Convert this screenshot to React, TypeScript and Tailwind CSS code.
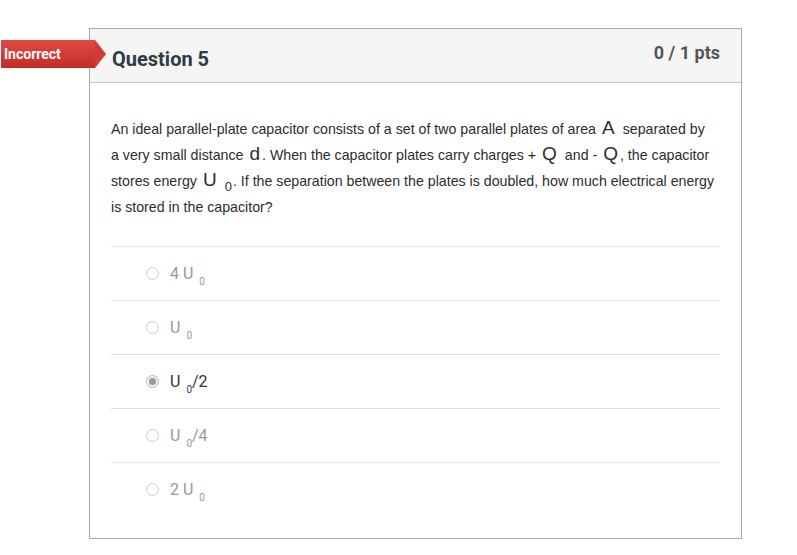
import React from 'react';

const options = [
  { id: 'a', pre: '4 ', post: '', selected: false },
  { id: 'b', pre: '', post: '', selected: false },
  { id: 'c', pre: '', post: '/2', selected: true },
  { id: 'd', pre: '', post: '/4', selected: false },
  { id: 'e', pre: '2 ', post: '', selected: false },
];

const MathVar = ({ children, tight }: { children: React.ReactNode; tight?: boolean }) => (
  <span className={`ml-[6px] text-[19px] leading-none ${tight ? 'mr-[2px]' : 'mr-[8px]'}`}>{children}</span>
);

export default function App() {
  return (
    <div className="min-h-screen bg-white pt-[28px] pl-[89px] font-['Liberation_Sans',Arial,sans-serif]">
      <div className="relative w-[653px] border border-[#aaa]">
        {/* Incorrect flag */}
        <div className="absolute left-[-89px] top-[11px] flex h-[28px] items-center">
          <div className="flex h-full w-[94px] items-center bg-gradient-to-b from-[#e04a45] to-[#c42b27] pl-[3px] font-['Roboto',sans-serif] text-[14px] font-bold text-white">
            Incorrect
          </div>
          <div className="h-0 w-0 border-y-[14px] border-l-[11px] border-y-transparent border-l-[#d23a35]" />
        </div>

        <div className="flex h-[54px] items-start justify-between border-b border-[#c7c7c7] bg-[#f5f5f5] pl-[22px] pr-[21px] font-['Roboto',sans-serif]">
          <div className="pt-[15px] text-[20px] font-bold text-[#2d3b45]">Question 5</div>
          <div className="pt-[10px] text-[18px] font-bold text-[#555]">0 / 1 pts</div>
        </div>

        <div className="px-[21px] pb-[22px] pt-[33px]">
          <p className="mr-[4px] text-[14.2px] leading-[26px] text-[#2d2d2d]">
            An ideal parallel-plate capacitor consists of a set of two parallel plates of area
            <MathVar>A</MathVar>
            separated by a very small distance<MathVar tight>d</MathVar>. When the capacitor plates carry charges +
            <MathVar>Q</MathVar>
            and -<MathVar tight>Q</MathVar>, the capacitor stores energy<MathVar>U</MathVar>
            <sub className="bottom-[-5px] mr-[1px] text-[13px]">0</sub>. If the separation between the plates is
            doubled, how much electrical energy is stored in the capacitor?
          </p>

          <div className="mt-[26px]">
            {options.map((o, i) => (
              <div
                key={o.id}
                className={`flex h-[54px] items-center border-t pl-[35px] ${
                  i === 2 || i === 3 ? 'border-[#dcdcdc]' : 'border-[#eaeaea]'
                }`}
              >
                <span
                  className={`mr-[11px] flex h-[13px] w-[13px] items-center justify-center rounded-full border ${
                    o.selected ? 'border-[#bbb] bg-[#f0f0f0]' : 'border-[#ccc] bg-white'
                  }`}
                >
                  {o.selected && <span className="h-[7px] w-[7px] rounded-full bg-[#999]" />}
                </span>
                <span
                  className={`font-['Roboto',sans-serif] text-[16px] ${
                    o.selected ? 'text-[#333]' : 'text-[#999]'
                  }`}
                >
                  {o.pre}U
                  <sub className={`bottom-[-6px] ml-[6px] text-[10px] ${o.selected ? 'text-[#1f3a6b]' : ''}`}>0</sub>
                  {o.post}
                </span>
              </div>
            ))}
          </div>
        </div>
      </div>
    </div>
  );
}
